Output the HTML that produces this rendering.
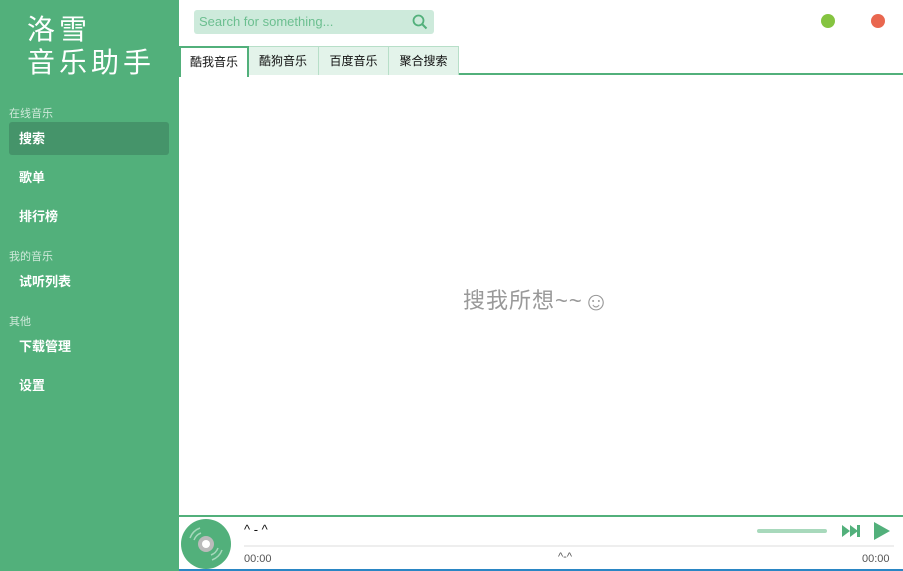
<!DOCTYPE html><html><head><meta charset="utf-8"><style>
*{margin:0;padding:0;box-sizing:border-box}
body{width:903px;height:571px;overflow:hidden;font-family:"Liberation Sans","Noto Sans CJK SC",sans-serif;background:#fff;position:relative}
.side{position:absolute;left:0;top:0;width:179px;height:571px;background:#52b07b;color:#fff}
.logo{position:absolute;left:27px;top:12px;font-size:28px;line-height:33px;letter-spacing:4px;font-family:"WenQuanYi Zen Hei","Noto Sans CJK SC",sans-serif}
.cat{position:absolute;left:9px;font-size:11px;color:#cfe9da}
.item{position:absolute;left:9px;width:160px;height:33px;line-height:33px;padding-left:10px;font-size:13px;font-weight:bold;border-radius:3px}
.sel{background:#45946a}
.search{position:absolute;left:194px;top:10px;width:240px;height:24px;background:#cdeadb;border-radius:3px;color:#6cbf90;font-size:13px;line-height:24px;padding-left:5px}
.dot{position:absolute;top:14px;width:14px;height:14px;border-radius:50%}
.tabs{position:absolute;left:179px;top:46px;height:29px;width:724px;border-bottom:2px solid #52b07b}
.tab{position:absolute;top:0;height:29px;font-size:12px;line-height:29px;text-align:center;background:#e3f3ea;border:1px solid #b7dfc8;border-bottom:none;color:#111}
.tab.a{background:#fff;border:2px solid #52b07b;border-bottom:none;height:31px}
.hint{position:absolute;left:463px;top:283px;font-size:22px;color:#999;letter-spacing:1px}
.player{position:absolute;left:179px;top:515px;width:724px;height:56px;border-top:2px solid #52b07b;border-bottom:2px solid #2a86c4}
.t{position:absolute;font-size:11px;color:#555}
</style></head><body>
<div class="side">
<div class="logo">洛雪<br>音乐助手</div>
<div class="cat" style="top:105px">在线音乐</div>
<div class="item sel" style="top:122px">搜索</div>
<div class="item" style="top:161px">歌单</div>
<div class="item" style="top:200px">排行榜</div>
<div class="cat" style="top:248px">我的音乐</div>
<div class="item" style="top:265px">试听列表</div>
<div class="cat" style="top:313px">其他</div>
<div class="item" style="top:330px">下载管理</div>
<div class="item" style="top:369px">设置</div>
</div>
<div class="search">Search for something...
<svg style="position:absolute;right:6px;top:4px" width="16" height="16" viewBox="0 0 16 16"><circle cx="6.5" cy="6.5" r="5" fill="none" stroke="#52b07b" stroke-width="1.8"/><path d="M10 10l4.5 4.5" stroke="#52b07b" stroke-width="2"/></svg></div>
<div class="dot" style="left:821px;background:#85c440"></div>
<div class="dot" style="left:871px;background:#e9674f"></div>
<div class="tabs">
<div class="tab" style="left:68px;width:72px">酷狗音乐</div>
<div class="tab" style="left:139px;width:71px">百度音乐</div>
<div class="tab" style="left:209px;width:71px">聚合搜索</div>
<div class="tab a" style="left:0;width:70px">酷我音乐</div>
</div>
<div class="hint">搜我所想~~<span style="font-size:26px;vertical-align:-2px">☺</span></div>
<div class="player">
<svg style="position:absolute;left:1px;top:1px" width="52" height="52" viewBox="0 0 52 52"><circle cx="26" cy="26" r="25" fill="#52b07b"/><circle cx="26" cy="26" r="8" fill="#bbb"/><circle cx="26" cy="26" r="4" fill="#fff"/><path d="M10 20a17 17 0 0 1 10-10M14 22a12 12 0 0 1 7-7M42 32a17 17 0 0 1-10 10M38 30a12 12 0 0 1-7 7" stroke="#a6d8bb" stroke-width="1.5" fill="none"/></svg>
<div class="t" style="left:65px;top:5px;font-size:13px;color:#111">^ - ^</div>
<div style="position:absolute;left:65px;top:28px;width:650px;height:2px;background:#eee"></div>
<div style="position:absolute;left:578px;top:12px;width:70px;height:4px;border-radius:2px;background:#a8d9bc"></div>
<svg style="position:absolute;left:662px;top:6px" width="20" height="16" viewBox="0 0 20 16"><path d="M1 2l8 6-8 6zM9 2l8 6-8 6z" fill="#52b07b"/><rect x="16" y="2" width="3" height="12" fill="#52b07b"/></svg>
<svg style="position:absolute;left:694px;top:4px" width="18" height="20" viewBox="0 0 18 20"><path d="M1 1l16 9-16 9z" fill="#52b07b"/></svg>
<div class="t" style="left:65px;top:36px">00:00</div>
<div class="t" style="left:379px;top:34px">^-^</div>
<div class="t" style="left:683px;top:36px">00:00</div>
</div>
</body></html>
